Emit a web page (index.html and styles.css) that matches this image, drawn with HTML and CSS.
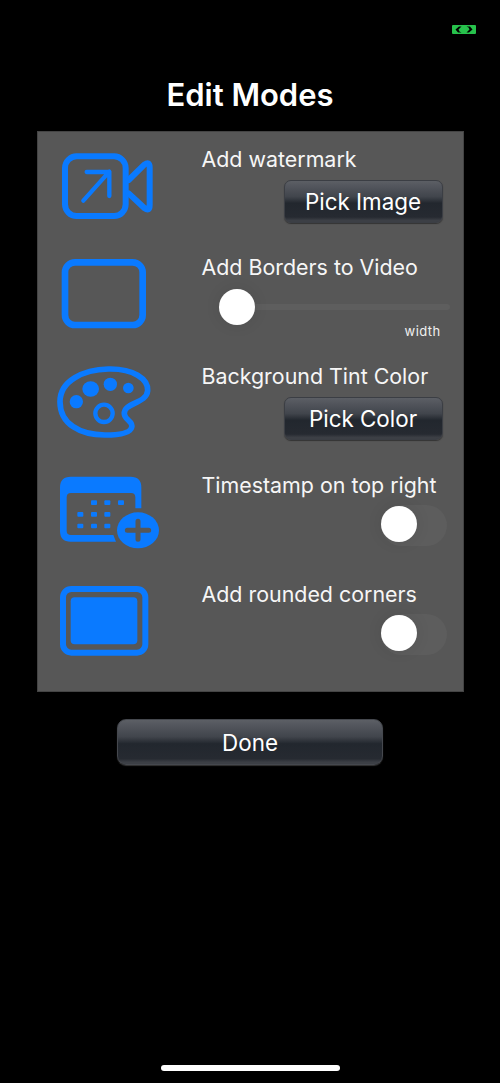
FILE: index.html
```html
<!DOCTYPE html>
<html lang="en">
<head>
<meta charset="utf-8">
<title>Edit Modes</title>
<link rel="stylesheet" href="styles.css">
</head>
<body>
<div class="page">
  <div class="status">
    <svg class="status-icon" viewBox="0 0 24 9" aria-hidden="true">
      <rect width="24" height="9" rx="1" fill="#27c24c"/>
      <path d="M9.5 1.5 H7 L3.5 4.5 L6 7.5 H9.5 L7.5 6.5 L6.5 4.5 Z M14.5 7.5 H17 L20.5 4.5 L18 1.5 H14.5 L16.5 2.5 L17.5 4.5 Z" fill="#000"/>
    </svg>
  </div>
  <h1 class="title">Edit Modes</h1>
  <main class="panel">
    <section class="row">
      <svg class="icon" viewBox="75 45 330 240" aria-hidden="true">
        <rect class="st18" x="105" y="79" width="182" height="179" rx="35"/>
        <path class="st18" d="M296 150 L343 104 Q359 92 359 112 V226 Q359 246 343 234 L296 190"/>
        <path class="st13" d="M160 212 L238 125 M170 126 H238 V198"/>
      </svg>
      <div class="cell">
        <div class="label">Add watermark</div>
        <button class="btn btn-pick" type="button">Pick Image</button>
      </div>
    </section>
    <section class="row">
      <svg class="icon" viewBox="75 372 330 240" aria-hidden="true">
        <rect class="st20" x="105" y="400" width="233" height="188" rx="30"/>
      </svg>
      <div class="cell">
        <div class="label">Add Borders to Video</div>
        <div class="slider"><span class="thumb"></span></div>
        <div class="caption">width</div>
      </div>
    </section>
    <section class="row">
      <svg class="icon" viewBox="75 39 330 240" aria-hidden="true">
        <path class="st17" d="M90 158 C90 95 160 62 235 60 C310 58 355 90 353 125 C350 165 280 160 283 195 C285 215 310 215 305 235 C300 255 255 258 225 258 C150 258 90 225 90 158 Z"/>
        <circle class="fill" cx="139" cy="158" r="20"/>
        <ellipse class="fill" cx="182" cy="120" rx="25" ry="23"/>
        <circle class="fill" cx="241" cy="106" r="20"/>
        <circle class="fill" cx="295" cy="117" r="16"/>
        <circle class="st13" cx="222" cy="193" r="26"/>
      </svg>
      <div class="cell">
        <div class="label">Background Tint Color</div>
        <button class="btn btn-pick" type="button">Pick Color</button>
      </div>
    </section>
    <section class="row">
      <svg class="icon" viewBox="75 366 330 240" aria-hidden="true">
        <path class="fill" d="M90 415 Q90 383 122 383 H302 Q334 383 334 415 V478 H316 V445 Q316 432 303 432 H123 Q110 432 110 445 V545 Q110 558 123 558 H250 L258 578 H122 Q90 578 90 546 Z"/>
        <g class="fill">
          <rect x="183" y="454" width="18" height="14" rx="3"/>
          <rect x="223" y="454" width="18" height="14" rx="3"/>
          <rect x="264" y="454" width="18" height="14" rx="3"/>
          <rect x="142" y="489" width="18" height="14" rx="3"/>
          <rect x="183" y="489" width="18" height="14" rx="3"/>
          <rect x="223" y="489" width="18" height="14" rx="3"/>
          <rect x="142" y="524" width="18" height="14" rx="3"/>
          <rect x="183" y="524" width="18" height="14" rx="3"/>
          <rect x="223" y="524" width="18" height="14" rx="3"/>
        </g>
        <ellipse class="fill" cx="324" cy="544" rx="63" ry="54"/>
        <path class="plus" d="M292 544 H356 M324 517 V571"/>
      </svg>
      <div class="cell">
        <div class="label">Timestamp on top right</div>
        <div class="toggle"><span class="thumb"></span></div>
      </div>
    </section>
    <section class="row">
      <svg class="icon" viewBox="75 30 330 240" aria-hidden="true">
        <rect class="st18" x="99" y="57" width="247" height="191" rx="25"/>
        <rect class="fill" x="122" y="82" width="200" height="141" rx="12"/>
      </svg>
      <div class="cell">
        <div class="label">Add rounded corners</div>
        <div class="toggle"><span class="thumb"></span></div>
      </div>
    </section>
  </main>
  <button class="btn btn-done" type="button">Done</button>
  <div class="home"></div>
</div>
</body>
</html>
```
FILE: styles.css
```css
* { box-sizing: border-box; }
html, body { margin: 0; height: 100%; background: #000; }
body { font-family: Inter, "Liberation Sans", sans-serif; color: #fff; overflow: hidden; }
.page { height: 1083px; display: flex; flex-direction: column; align-items: center; }
.status { align-self: stretch; display: flex; justify-content: flex-end; padding: 25px 24px 0 0; height: 35px; }
.status-icon { width: 24px; height: 9px; display: block; }
.title { margin: 40px 0 0; font-size: 31px; line-height: 40px; font-weight: 600; }
.panel { width: 427px; height: 561px; margin-top: 16px; background: #575757; border: 1px solid #444; padding: 12.6px 0 0 17px; display: flex; flex-direction: column; }
.row { height: 108.8px; display: grid; grid-template-columns: 147px 1fr; }
.icon { width: 110px; height: 80px; display: block; }
.cell { display: flex; flex-direction: column; align-items: flex-start; }
.label { font-size: 21.4px; line-height: 28px; height: 28px; font-weight: 400; white-space: nowrap; color: #f6f6f6; }
.btn { display: block; font-family: inherit; color: #fff; border: 1px solid #3b3e44; padding: 0; text-align: center; box-shadow: 0 1px 1px #333;
  background: linear-gradient(#5c5f65 0, #52555c 14%, #41454c 38%, #22272e 54%, #262a31 88%, #3c3f45 96%, #3c3f45 100%); }
.btn-pick { width: 159px; height: 43px; margin: 7px 0 0 82px; border-radius: 7px; font-size: 22.4px; line-height: 42px; }
.btn-done { width: 266px; height: 46px; margin-top: 27px; border-radius: 9px; font-size: 22.4px; line-height: 45px; border-color: #45484e; }
.slider { position: relative; width: 231px; height: 6px; margin: 23px 0 0 17px; background: #5e5e5e; border-radius: 3px; }
.slider .thumb { left: 0; top: -15px; }
.thumb { position: absolute; width: 36px; height: 36px; border-radius: 50%; background: #fff; box-shadow: 0 0 16px rgba(0,0,0,.08); }
.caption { align-self: flex-end; margin: 12px 22px 0 0; font-size: 13px; line-height: 18px; color: #f0f0f0; letter-spacing: .4px; }
.toggle { position: relative; width: 66px; height: 41px; margin: 6px 0 0 179px; border-radius: 21px; background: #5d5d5d; }
.toggle .thumb { left: 0; top: 1px; }
.fill { fill: #0a7aff; }
.st18, .st20, .st17, .st13 { fill: none; stroke: #0a7aff; stroke-linecap: round; stroke-linejoin: round; }
.st18 { stroke-width: 18; }
.st20 { stroke-width: 20; }
.st17 { stroke-width: 17; }
.st13 { stroke-width: 13; }
.plus { fill: none; stroke: #575757; stroke-width: 15; stroke-linecap: round; }
.home { margin-top: auto; margin-bottom: 12px; width: 179px; height: 6px; border-radius: 3px; background: #fff; }
```
